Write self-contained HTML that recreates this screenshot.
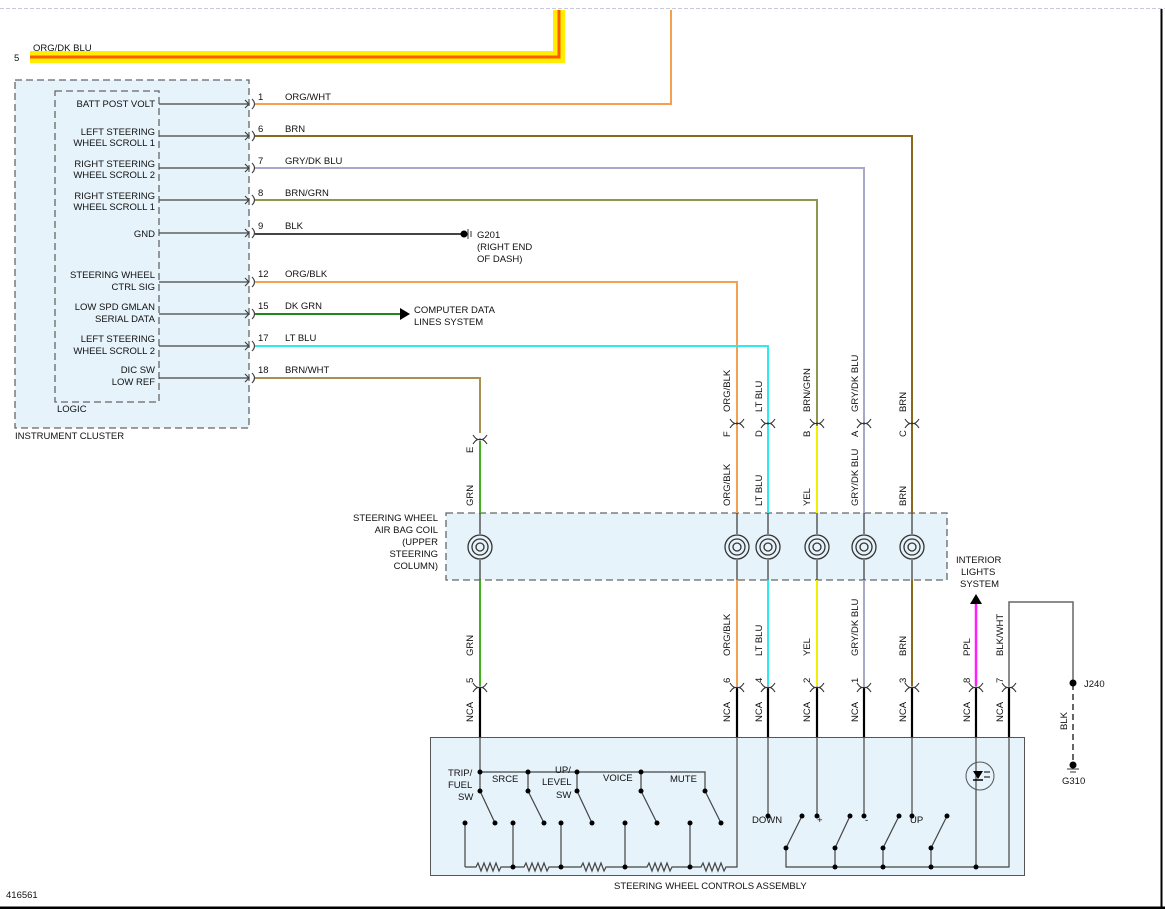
<!DOCTYPE html>
<html><head><meta charset="utf-8"><style>
html,body{margin:0;padding:0;background:#fff;}
svg{display:block;}
text{font-family:"Liberation Sans",sans-serif;font-size:9.5px;fill:#111;}
</style></head><body>
<svg width="1165" height="909" viewBox="0 0 1165 909" xmlns="http://www.w3.org/2000/svg">
<defs>
<pattern id="bg" width="2" height="2" patternUnits="userSpaceOnUse"><rect width="2" height="2" fill="#e6f3fa"/></pattern>
<g id="coil" fill="none" stroke="#333" stroke-width="1.3">
<circle r="12"/><circle r="8"/><circle r="4"/>
</g>
<g id="cn" fill="none" stroke="#333" stroke-width="1.1"><path d="M-7,-5 Q-3,1 0,-1 Q3,1 7,-5 M-7,4 Q-3,-2 0,0 Q3,-2 7,4"/></g>
</defs>
<line x1="0" y1="8.5" x2="1165" y2="8.5" stroke="#c8c8e0" stroke-dasharray="4,2"/>
<line x1="1161.5" y1="9" x2="1161.5" y2="909" stroke="#000" stroke-width="2"/>
<line x1="0" y1="908" x2="1165" y2="908" stroke="#000" stroke-width="3"/>

<path d="M30,57 H559 V10" fill="none" stroke="#ffee00" stroke-width="12"/>
<path d="M30,57 H559 V10" fill="none" stroke="#ff5a00" stroke-width="3"/>
<text x="14" y="61">5</text><text x="33" y="51">ORG/DK BLU</text>

<rect x="15" y="80" width="234" height="348" fill="url(#bg)" stroke="#666" stroke-dasharray="7,4" stroke-width="1.3"/>
<rect x="55" y="91" width="104" height="311" fill="none" stroke="#666" stroke-dasharray="7,4" stroke-width="1.3"/>
<text x="57" y="412">LOGIC</text>
<text x="15" y="439">INSTRUMENT CLUSTER</text>
<g text-anchor="end">
<text x="155" y="107">BATT POST VOLT</text>
<text x="155" y="135">LEFT STEERING</text><text x="155" y="146">WHEEL SCROLL 1</text>
<text x="155" y="167">RIGHT STEERING</text><text x="155" y="178">WHEEL SCROLL 2</text>
<text x="155" y="199">RIGHT STEERING</text><text x="155" y="210">WHEEL SCROLL 1</text>
<text x="155" y="237">GND</text>
<text x="155" y="278">STEERING WHEEL</text><text x="155" y="290">CTRL SIG</text>
<text x="155" y="310">LOW SPD GMLAN</text><text x="155" y="322">SERIAL DATA</text>
<text x="155" y="342">LEFT STEERING</text><text x="155" y="354">WHEEL SCROLL 2</text>
<text x="155" y="373">DIC SW</text><text x="155" y="385">LOW REF</text>
</g>
<g stroke="#444" stroke-width="1.2" fill="none">
<path d="M159,104 H249 M245,100 L249,104 L245,108"/>
<path d="M159,136 H249 M245,132 L249,136 L245,140"/>
<path d="M159,168 H249 M245,164 L249,168 L245,172"/>
<path d="M159,200 H249 M245,196 L249,200 L245,204"/>
<path d="M159,233 H249 M245,229 L249,233 L245,237"/>
<path d="M159,282 H249 M245,278 L249,282 L245,286"/>
<path d="M159,314 H249 M245,310 L249,314 L245,318"/>
<path d="M159,346 H249 M245,342 L249,346 L245,350"/>
<path d="M159,378 H249 M245,374 L249,378 L245,382"/>
<path d="M252,99 Q257,104 252,109 M252,131 Q257,136 252,141 M252,163 Q257,168 252,173 M252,195 Q257,200 252,205 M252,228 Q257,233 252,238 M252,277 Q257,282 252,287 M252,309 Q257,314 252,319 M252,341 Q257,346 252,351 M252,373 Q257,378 252,383"/>
</g>
<g fill="none" stroke-width="2">
<path d="M255,104 H671 V10" stroke="#f4a050"/>
<path d="M255,136 H912 V426" stroke="#8a6a1a"/>
<path d="M255,168 H864 V426" stroke="#a8a8c8"/>
<path d="M255,200 H817 V426" stroke="#8c9850"/>
<path d="M255,234 H463" stroke="#444"/>
<path d="M255,282 H737 V426" stroke="#f4a050"/>
<path d="M255,314 H400" stroke="#1a8a1a"/>
<path d="M255,346 H768 V426" stroke="#30e8f0"/>
<path d="M255,378 H480 V433" stroke="#a89050"/>
</g>
<g>
<text x="258" y="100">1</text><text x="285" y="100">ORG/WHT</text>
<text x="258" y="132">6</text><text x="285" y="132">BRN</text>
<text x="258" y="164">7</text><text x="285" y="164">GRY/DK BLU</text>
<text x="258" y="196">8</text><text x="285" y="196">BRN/GRN</text>
<text x="258" y="229">9</text><text x="285" y="229">BLK</text>
<text x="258" y="277">12</text><text x="285" y="277">ORG/BLK</text>
<text x="258" y="309">15</text><text x="285" y="309">DK GRN</text>
<text x="258" y="341">17</text><text x="285" y="341">LT BLU</text>
<text x="258" y="373">18</text><text x="285" y="373">BRN/WHT</text>
</g>
<circle cx="464" cy="234" r="3.5" fill="#000"/>
<line x1="468" y1="229" x2="468" y2="239" stroke="#333"/><line x1="471" y1="231" x2="471" y2="237" stroke="#333"/>
<text x="477" y="238">G201</text><text x="477" y="250">(RIGHT END</text><text x="477" y="262">OF DASH)</text>
<polygon points="400,308 410,314 400,320" fill="#000"/>
<text x="414" y="313">COMPUTER DATA</text><text x="414" y="325">LINES SYSTEM</text>

<use href="#cn" x="480" y="440"/>
<use href="#cn" x="737" y="424"/><use href="#cn" x="768" y="424"/><use href="#cn" x="817" y="424"/><use href="#cn" x="864" y="424"/><use href="#cn" x="912" y="424"/>

<rect x="446" y="513" width="501" height="67" fill="url(#bg)" stroke="#666" stroke-dasharray="7,4" stroke-width="1.3"/>
<g text-anchor="end">
<text x="438" y="521">STEERING WHEEL</text><text x="438" y="533">AIR BAG COIL</text><text x="438" y="545">(UPPER</text><text x="438" y="557">STEERING</text><text x="438" y="569">COLUMN)</text>
</g>
<g fill="none" stroke-width="2">
<path d="M480,441 V513 M480,580 V686" stroke="#40b020"/>
<path d="M737,426 V513 M737,580 V686" stroke="#f4a050"/>
<path d="M768,426 V513 M768,580 V686" stroke="#30e8f0"/>
<path d="M817,426 V513 M817,580 V686" stroke="#f0f000"/>
<path d="M864,426 V513 M864,580 V686" stroke="#a8a8c8"/>
<path d="M912,426 V513 M912,580 V686" stroke="#8a6a1a"/>
</g>
<g stroke="#333" stroke-width="1.2">
<line x1="480" y1="513" x2="480" y2="580"/><line x1="737" y1="513" x2="737" y2="580"/><line x1="768" y1="513" x2="768" y2="580"/><line x1="817" y1="513" x2="817" y2="580"/><line x1="864" y1="513" x2="864" y2="580"/><line x1="912" y1="513" x2="912" y2="580"/>
</g>
<g fill="#e6f3fa"><circle cx="480" cy="547" r="13"/><circle cx="737" cy="547" r="13"/><circle cx="768" cy="547" r="13"/><circle cx="817" cy="547" r="13"/><circle cx="864" cy="547" r="13"/><circle cx="912" cy="547" r="13"/></g>
<use href="#coil" x="480" y="547"/><use href="#coil" x="737" y="547"/><use href="#coil" x="768" y="547"/><use href="#coil" x="817" y="547"/><use href="#coil" x="864" y="547"/><use href="#coil" x="912" y="547"/>

<g>
<text transform="translate(473,453) rotate(-90)">E</text>
<text transform="translate(473,506) rotate(-90)">GRN</text>
<text transform="translate(473,656) rotate(-90)">GRN</text>
<text transform="translate(473,683) rotate(-90)">5</text>
<text transform="translate(473,722) rotate(-90)">NCA</text>
<text transform="translate(730,412) rotate(-90)">ORG/BLK</text><text transform="translate(730,437) rotate(-90)">F</text><text transform="translate(730,506) rotate(-90)">ORG/BLK</text><text transform="translate(730,656) rotate(-90)">ORG/BLK</text><text transform="translate(730,683) rotate(-90)">6</text><text transform="translate(730,722) rotate(-90)">NCA</text>
<text transform="translate(762,412) rotate(-90)">LT BLU</text><text transform="translate(762,437) rotate(-90)">D</text><text transform="translate(762,506) rotate(-90)">LT BLU</text><text transform="translate(762,656) rotate(-90)">LT BLU</text><text transform="translate(762,683) rotate(-90)">4</text><text transform="translate(762,722) rotate(-90)">NCA</text>
<text transform="translate(810,412) rotate(-90)">BRN/GRN</text><text transform="translate(810,437) rotate(-90)">B</text><text transform="translate(810,506) rotate(-90)">YEL</text><text transform="translate(810,656) rotate(-90)">YEL</text><text transform="translate(810,683) rotate(-90)">2</text><text transform="translate(810,722) rotate(-90)">NCA</text>
<text transform="translate(858,412) rotate(-90)">GRY/DK BLU</text><text transform="translate(858,437) rotate(-90)">A</text><text transform="translate(858,506) rotate(-90)">GRY/DK BLU</text><text transform="translate(858,656) rotate(-90)">GRY/DK BLU</text><text transform="translate(858,683) rotate(-90)">1</text><text transform="translate(858,722) rotate(-90)">NCA</text>
<text transform="translate(906,412) rotate(-90)">BRN</text><text transform="translate(906,437) rotate(-90)">C</text><text transform="translate(906,506) rotate(-90)">BRN</text><text transform="translate(906,656) rotate(-90)">BRN</text><text transform="translate(906,683) rotate(-90)">3</text><text transform="translate(906,722) rotate(-90)">NCA</text>
<text transform="translate(970,656) rotate(-90)">PPL</text><text transform="translate(970,683) rotate(-90)">8</text><text transform="translate(970,722) rotate(-90)">NCA</text>
<text transform="translate(1003,656) rotate(-90)">BLK/WHT</text><text transform="translate(1003,683) rotate(-90)">7</text><text transform="translate(1003,722) rotate(-90)">NCA</text>
<text transform="translate(1067,730) rotate(-90)">BLK</text>
</g>

<text x="956" y="563">INTERIOR</text><text x="961" y="575">LIGHTS</text><text x="960" y="587">SYSTEM</text>
<line x1="976" y1="604" x2="976" y2="686" stroke="#ff20ff" stroke-width="2.5"/>
<polygon points="970,604 982,604 976,594" fill="#000"/>
<path d="M1009,686 V602 H1073 V681" fill="none" stroke="#666" stroke-width="1.5"/>
<line x1="1073" y1="684" x2="1073" y2="762" stroke="#666" stroke-width="2" stroke-dasharray="6,4"/>
<circle cx="1073" cy="683" r="3.5" fill="#000"/><text x="1084" y="687">J240</text>
<circle cx="1073" cy="765" r="3.5" fill="#000"/>
<line x1="1067" y1="769" x2="1079" y2="769" stroke="#333"/><line x1="1070" y1="772" x2="1076" y2="772" stroke="#333"/>
<text x="1062" y="784">G310</text>

<g stroke="#000" stroke-width="2.2">
<line x1="480" y1="688" x2="480" y2="763"/><line x1="737" y1="688" x2="737" y2="737"/><line x1="768" y1="688" x2="768" y2="737"/><line x1="817" y1="688" x2="817" y2="737"/><line x1="864" y1="688" x2="864" y2="737"/><line x1="912" y1="688" x2="912" y2="737"/><line x1="976" y1="688" x2="976" y2="737"/><line x1="1009" y1="688" x2="1009" y2="737"/>
</g>
<use href="#cn" x="480" y="688"/><use href="#cn" x="737" y="688"/><use href="#cn" x="768" y="688"/><use href="#cn" x="817" y="688"/><use href="#cn" x="864" y="688"/><use href="#cn" x="912" y="688"/><use href="#cn" x="976" y="688"/><use href="#cn" x="1009" y="688"/>

<rect x="430.5" y="737.5" width="594" height="138" fill="url(#bg)" stroke="#555" stroke-width="1"/>
<text x="614" y="889">STEERING WHEEL CONTROLS ASSEMBLY</text>
<g stroke="#444" stroke-width="1.2" fill="none">
<path d="M480,737 V791 M480,772 H705 V791 M528,772 V791 M577,772 V791 M641,772 V791"/>
<path d="M480,791 L495,823 M528,791 L544,823 M577,791 L592,823 M641,791 L657,823 M705,791 L721,823"/>
<path d="M465,823 V867 M513,823 V867 M561,823 V867 M625,823 V867 M690,823 V867"/>
<path d="M465,867 H476 l2,-4 l3,8 l3,-8 l3,8 l3,-8 l3,8 l3,-8 l3,8 l2,-4 H524 l2,-4 l3,8 l3,-8 l3,8 l3,-8 l3,8 l3,-8 l3,8 l2,-4 H581 l2,-4 l3,8 l3,-8 l3,8 l3,-8 l3,8 l3,-8 l3,8 l2,-4 H647 l2,-4 l3,8 l3,-8 l3,8 l3,-8 l3,8 l3,-8 l3,8 l2,-4 H701 l2,-4 l3,8 l3,-8 l3,8 l3,-8 l3,8 l3,-8 l3,8 l2,-4 H737 V737"/>
<path d="M768,737 V816 M817,737 V816 M864,737 V816 M912,737 V816"/>
<path d="M786,848 L802,816 M835,848 L850,816 M883,848 L899,816 M931,848 L947,816"/>
<path d="M786,848 V867 H1009 V737 M835,848 V867 M883,848 V867 M931,848 V867"/>
<path d="M976,737 V867"/>
</g>
<g fill="#000">
<circle cx="480" cy="772" r="2.5"/><circle cx="528" cy="772" r="2.5"/><circle cx="577" cy="772" r="2.5"/><circle cx="641" cy="772" r="2.5"/>
<circle cx="480" cy="791" r="2.5"/><circle cx="528" cy="791" r="2.5"/><circle cx="577" cy="791" r="2.5"/><circle cx="641" cy="791" r="2.5"/><circle cx="705" cy="791" r="2.5"/>
<circle cx="495" cy="823" r="2.5"/><circle cx="544" cy="823" r="2.5"/><circle cx="592" cy="823" r="2.5"/><circle cx="657" cy="823" r="2.5"/><circle cx="721" cy="823" r="2.5"/>
<circle cx="465" cy="823" r="2.5"/><circle cx="513" cy="823" r="2.5"/><circle cx="561" cy="823" r="2.5"/><circle cx="625" cy="823" r="2.5"/><circle cx="690" cy="823" r="2.5"/>
<circle cx="513" cy="867" r="2.5"/><circle cx="561" cy="867" r="2.5"/><circle cx="625" cy="867" r="2.5"/><circle cx="690" cy="867" r="2.5"/>
<circle cx="768" cy="816" r="2.5"/><circle cx="817" cy="816" r="2.5"/><circle cx="864" cy="816" r="2.5"/><circle cx="912" cy="816" r="2.5"/>
<circle cx="802" cy="816" r="2.5"/><circle cx="850" cy="816" r="2.5"/><circle cx="899" cy="816" r="2.5"/><circle cx="947" cy="816" r="2.5"/>
<circle cx="786" cy="848" r="2.5"/><circle cx="835" cy="848" r="2.5"/><circle cx="883" cy="848" r="2.5"/><circle cx="931" cy="848" r="2.5"/>
<circle cx="835" cy="867" r="2.5"/><circle cx="883" cy="867" r="2.5"/><circle cx="931" cy="867" r="2.5"/><circle cx="976" cy="867" r="2.5"/>
</g>
<circle cx="980" cy="776" r="14" fill="none" stroke="#555" stroke-width="1"/>
<polygon points="973,771 983,771 978,779" fill="#000"/><line x1="973" y1="780" x2="983" y2="780" stroke="#000" stroke-width="1.5"/>
<path d="M984,772 h6 M984,777 h6" stroke="#000" stroke-width="1"/>
<text x="448" y="776">TRIP/</text><text x="448" y="788">FUEL</text><text x="458" y="800">SW</text>
<text x="492" y="782">SRCE</text>
<text x="555" y="773">UP/</text><text x="542" y="785">LEVEL</text><text x="556" y="798">SW</text>
<text x="603" y="781">VOICE</text>
<text x="670" y="782">MUTE</text>
<text x="752" y="823">DOWN</text><text x="817" y="823">+</text><text x="865" y="823">-</text><text x="910" y="823">UP</text>
<text x="6" y="898">416561</text>
</svg>
</body></html>
